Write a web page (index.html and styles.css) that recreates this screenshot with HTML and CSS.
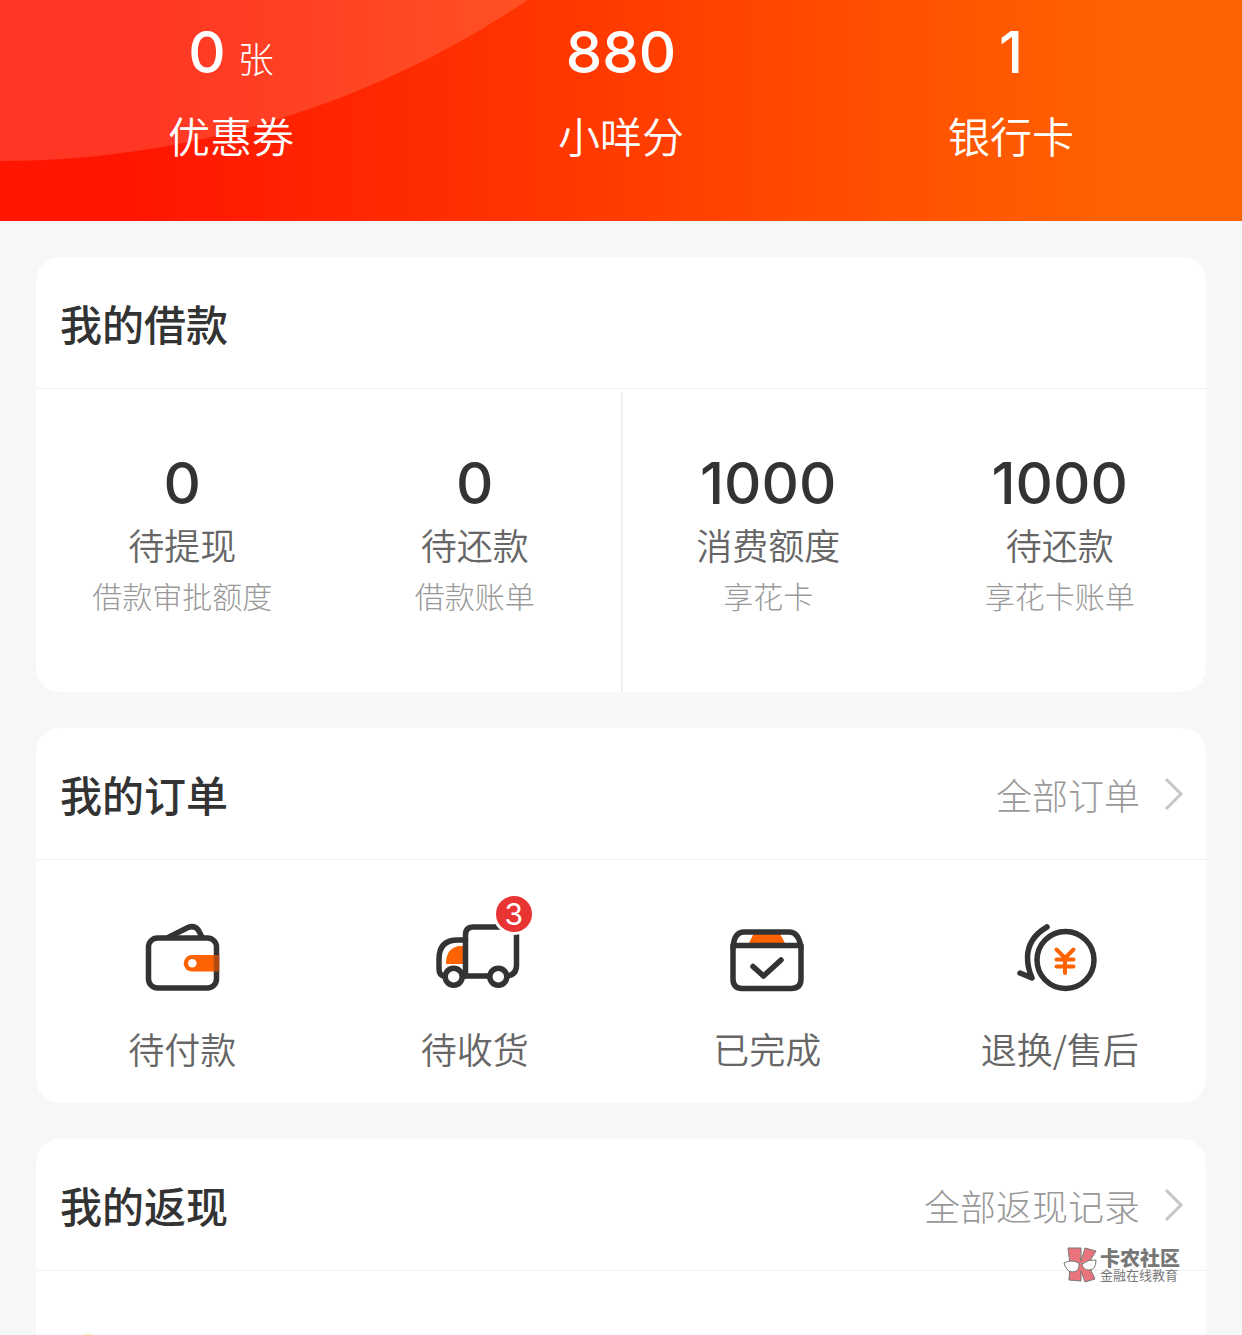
FILE: index.html
```html
<!DOCTYPE html>
<html lang="zh-CN">
  <head>
    <meta charset="UTF-8" />
    <title>我的</title>
    <meta name="viewport" content="width=device-width, initial-scale=1.0" />
    <link rel="stylesheet" href="styles.css">
  </head>
  <body>
    <header class="top">
      <svg class="top-arc" width="946" height="161" viewBox="0 0 946 161">
        <circle cx="0" cy="-785" r="946" fill="#fff" fill-opacity="0.14" />
      </svg>
      <a class="top-item" href="#">
        <span class="top-num">0<small>张</small></span>
        <span class="top-label">优惠券</span>
      </a>
      <a class="top-item" href="#">
        <span class="top-num">880</span>
        <span class="top-label">小咩分</span>
      </a>
      <a class="top-item" href="#">
        <span class="top-num">1</span>
        <span class="top-label">银行卡</span>
      </a>
    </header>

    <main class="content">
      <section class="card">
        <div class="card-head">
          <h2>我的借款</h2>
        </div>
        <div class="loan">
          <a class="loan-item" href="#">
            <span class="num">0</span>
            <span class="label">待提现</span>
            <span class="sub">借款审批额度</span>
          </a>
          <a class="loan-item" href="#">
            <span class="num">0</span>
            <span class="label">待还款</span>
            <span class="sub">借款账单</span>
          </a>
          <a class="loan-item split" href="#">
            <span class="num">1000</span>
            <span class="label">消费额度</span>
            <span class="sub">享花卡</span>
          </a>
          <a class="loan-item" href="#">
            <span class="num">1000</span>
            <span class="label">待还款</span>
            <span class="sub">享花卡账单</span>
          </a>
        </div>
      </section>

      <section class="card">
        <div class="card-head">
          <h2>我的订单</h2>
          <a class="more" href="#">
            全部订单
            <svg width="20" height="34" viewBox="0 0 20 34"><path d="M2 2l15 15L2 32" /></svg>
          </a>
        </div>
        <div class="orders">
          <a class="order-item" href="#">
            <svg class="icon" viewBox="0 0 90 90">
              <path d="M32 22L51 12.500Q57 10 61 14.500L65 22" />
              <rect x="11.500" y="23" width="68" height="50" rx="9" />
              <path class="fill" d="M77 40H55a8.300 8.300 0 0 0 0 16.600H77z" />
              <path class="edge" d="M79.500 40v16.600" />
              <circle class="hole" cx="55.300" cy="48.300" r="4.300" />
            </svg>
            <span class="label">待付款</span>
          </a>
          <a class="order-item" href="#">
            <span class="icon-box">
              <svg class="icon" viewBox="0 0 90 90">
                <path class="fill" d="M33 31H29Q16 33 16 49H33z" />
                <path d="M15 61Q9 61 9 54V44Q9 25 28 25H35.500" />
                <path d="M35.500 61V20Q35.500 12 43.500 12H79Q86.500 12 86.500 20V50Q86.500 60 77 61" />
                <path d="M32 61H60" />
                <circle class="wheel" cx="23.700" cy="61.700" r="8.500" />
                <circle class="wheel" cx="68.300" cy="61.700" r="8.500" />
              </svg>
              <span class="badge">3</span>
            </span>
            <span class="label">待收货</span>
          </a>
          <a class="order-item" href="#">
            <svg class="icon" viewBox="0 0 90 90">
              <path class="fill" d="M27 28L32 18H57.500L63 28z" />
              <path d="M11 33Q12 17 22 17H67Q77 17 79 33" />
              <path d="M11 30.500H79V64Q79 73.500 69 73.500H20Q11 73.500 11 64z" />
              <path d="M31 51.500L41.500 61L59 45" />
            </svg>
            <span class="label">已完成</span>
          </a>
          <a class="order-item" href="#">
            <svg class="icon" viewBox="0 0 90 90">
              <circle cx="50.500" cy="45" r="28.500" />
              <path d="M32 12Q13 23 12.500 42Q12.500 53 17 63L5 58" />
              <path class="yen" d="M41.500 34.500L50 43L58.500 34.500M41.500 44.500H58.500M41.500 51.500H58.500M50 43V58" />
            </svg>
            <span class="label">退换/售后</span>
          </a>
        </div>
      </section>

      <section class="card last">
        <div class="card-head">
          <h2>我的返现</h2>
          <a class="more" href="#">
            全部返现记录
            <svg width="20" height="34" viewBox="0 0 20 34"><path d="M2 2l15 15L2 32" /></svg>
          </a>
          <div class="mark">
            <svg width="34" height="36" viewBox="0 0 34 36">
              <path d="M5 1H18V14L22 1L33 4L25 17L32 32L22 35L18 24V34L6 33L7 17z" fill="#ea747b" stroke="#777" />
              <path d="M1 16Q8 12 16 16Q17 25 9 25Q3 24 1 16zM19 17Q26 12 33 13Q33 23 26 23Q20 23 19 17zM16 17Q17 15 19 17" fill="#fff" stroke="#777" />
            </svg>
            <div class="mark-text">
              <strong>卡农社区</strong>
              <span>金融在线教育</span>
            </div>
          </div>
        </div>
        <div class="cashback">
          <svg width="32" height="32" viewBox="0 0 32 32"><circle cx="16" cy="16" r="16" fill="#f9e9a0" /></svg>
        </div>
      </section>
    </main>
  </body>
</html>
```

FILE: styles.css
```css
* {
  box-sizing: border-box;
}

body {
  display: flex;
  flex-direction: column;
  height: 100vh;
  margin: 0;
  overflow: hidden;
  background: #f6f7f9;
  color: #333;
  font-family: "Noto Sans CJK SC", sans-serif;
  font-weight: 300;
}

a {
  color: inherit;
  text-decoration: none;
}

.top {
  position: relative;
  display: flex;
  flex-shrink: 0;
  padding: 22px 36px 58px;
  overflow: hidden;
  background: linear-gradient(90deg, #ff1500 10%, #ff6200 90%);
  color: #fff;
}

.top-arc {
  position: absolute;
  top: 0;
  left: 0;
}

.top-item {
  position: relative;
  flex: 1;
  display: flex;
  flex-direction: column;
  align-items: center;
  gap: 25px;
}

.top-num,
.num {
  font-family: Inter, "Noto Sans CJK SC", sans-serif;
  font-size: 58px;
  font-weight: 500;
  line-height: 60px;
}

.top-num {
  display: flex;
  align-items: baseline;
  gap: 12px;
  height: 60px;
}

.top-num small {
  font-size: 36px;
  font-weight: 300;
  line-height: 36px;
}

.top-label {
  font-size: 42px;
  font-weight: 350;
  line-height: 56px;
}

.content {
  flex: 1;
  display: flex;
  flex-direction: column;
  gap: 36px;
  min-height: 0;
  padding: 36px 36px 0;
}

.card {
  flex-shrink: 0;
  border-radius: 24px;
  background: #fff;
}

.card-head {
  position: relative;
  display: flex;
  align-items: center;
  justify-content: space-between;
  height: 132px;
  padding: 0 22px 0 24px;
  border-bottom: 1px solid #f0f0f0;
}

.card-head h2 {
  margin: 0;
  font-size: 42px;
  font-weight: 500;
}

.more {
  display: flex;
  align-items: center;
  gap: 24px;
  color: #999;
  font-size: 36px;
}

.more path {
  fill: none;
  stroke: #c4c6c9;
  stroke-width: 3;
}

.loan,
.orders {
  display: grid;
  grid-template-columns: repeat(4, 1fr);
}

.loan {
  padding-top: 3px;
}

.loan-item {
  display: flex;
  flex-direction: column;
  align-items: center;
  padding: 61px 0 77px;
}

.split {
  border-left: 2px solid #f0f0f0;
}

.label {
  color: #666;
  font-size: 36px;
  font-weight: 350;
  line-height: 48px;
}

.loan .label {
  margin: 7px 0;
}

.sub {
  color: #999;
  font-size: 30px;
  line-height: 40px;
}

.order-item {
  display: flex;
  flex-direction: column;
  align-items: center;
  gap: 19px;
  padding: 55px 0 31px;
}

.icon-box {
  position: relative;
  display: flex;
}

.icon {
  width: 90px;
  height: 90px;
  fill: none;
  stroke: #333;
  stroke-width: 5.5;
  stroke-linecap: round;
  stroke-linejoin: round;
}

.icon .fill {
  fill: #ff6200;
  stroke: none;
}

.icon .edge {
  stroke: #b04a10;
  stroke-linecap: butt;
}

.icon .hole {
  fill: #fff;
  stroke: none;
}

.icon .wheel {
  fill: #fff;
}

.icon .yen {
  stroke: #ff6200;
  stroke-width: 4;
}

.badge {
  position: absolute;
  top: -22px;
  right: -15px;
  width: 42px;
  height: 42px;
  border: 3px solid #fff;
  border-radius: 50%;
  background: #e93434;
  color: #fff;
  font-family: Inter, sans-serif;
  font-size: 30px;
  font-weight: 400;
  line-height: 36px;
  text-align: center;
}

.last {
  flex: 1;
  display: flex;
  flex-direction: column;
  min-height: 0;
  border-radius: 24px 24px 0 0;
}

.last .card-head {
  flex-shrink: 0;
}

.cashback {
  min-height: 0;
  padding: 63px 36px 0;
  overflow: hidden;
}

.mark {
  position: absolute;
  right: 26px;
  bottom: -13px;
  display: flex;
  align-items: center;
  gap: 3px;
  color: #777;
}

.mark-text {
  display: flex;
  flex-direction: column;
}

.mark-text strong {
  font-size: 20px;
  font-weight: 900;
  line-height: 20px;
}

.mark-text span {
  font-size: 13px;
  font-weight: 400;
  line-height: 14px;
}
```
